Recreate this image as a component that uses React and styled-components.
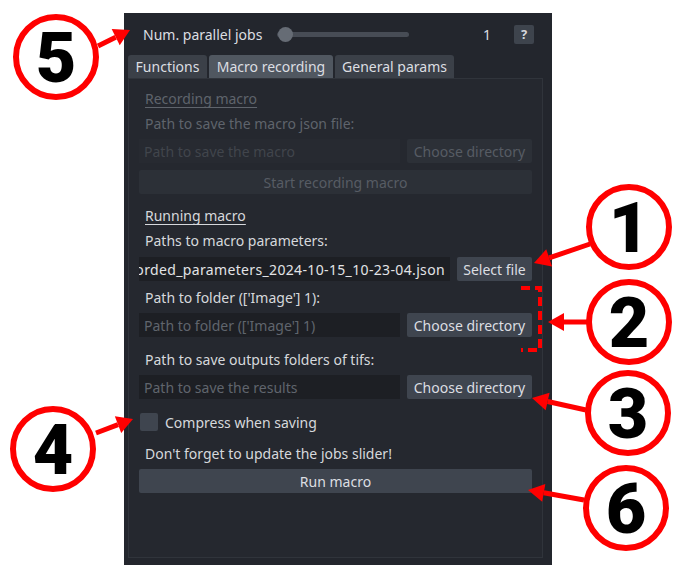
import styled, { createGlobalStyle } from "styled-components";

const GlobalStyle = createGlobalStyle`
  html, body {
    margin: 0;
    padding: 0;
    background: #ffffff;
  }
  body {
    font-family: "Noto Sans", "DejaVu Sans", sans-serif;
  }
`;

const Page = styled.div`
  position: relative;
  width: 682px;
  height: 580px;
  padding: 13px 0 0 124px;
  box-sizing: border-box;
  overflow: hidden;
`;

const Panel = styled.div`
  width: 428px;
  height: 552px;
  box-sizing: border-box;
  background: #23262d;
  padding: 0 9px 7px 4px;
  display: flex;
  flex-direction: column;
  font-size: 14px;
  color: #d6d8dc;
`;

const Header = styled.div`
  height: 42px;
  display: flex;
  align-items: center;
  padding: 0 0 0 15px;
  box-sizing: border-box;
`;

const HeaderLabel = styled.span`
  width: 134px;
  white-space: nowrap;
  color: #dcdee2;
`;

const Slider = styled.div`
  position: relative;
  width: 132px;
  height: 5px;
  border-radius: 3px;
  background: #474c55;
`;

const Handle = styled.div`
  position: absolute;
  left: 1px;
  top: -5px;
  width: 15px;
  height: 15px;
  border-radius: 50%;
  background: #666c75;
`;

const JobCount = styled.span`
  margin-left: 74px;
  width: 31px;
  color: #dcdee2;
`;

const HelpButton = styled.div`
  width: 20px;
  height: 19px;
  border-radius: 2px;
  background: #3e444d;
  color: #d6d8dc;
  font-size: 13px;
  font-weight: 700;
  display: flex;
  align-items: center;
  justify-content: center;
`;

const TabBar = styled.div`
  display: flex;
  gap: 2px;
  height: 23px;
`;

const Tab = styled.div`
  width: ${({ $w }) => $w}px;
  height: 23px;
  box-sizing: border-box;
  border-radius: 3px 3px 0 0;
  background: ${({ $active }) => ($active ? "#505760" : "#3b4048")};
  color: #dcdee2;
  display: flex;
  align-items: center;
  justify-content: center;
  white-space: nowrap;
`;

const Frame = styled.div`
  flex: 1;
  border: 1px solid #30343b;
  background: #25282f;
  padding: 11px 10px 0 10px;
  display: flex;
  flex-direction: column;
`;

const Label = styled.div`
  margin-top: ${({ $mt }) => $mt || 0}px;
  height: 18px;
  line-height: 18px;
  padding-left: 6px;
  white-space: nowrap;
  color: ${({ $disabled }) => ($disabled ? "#5f646c" : "#d6d8dc")};
  text-decoration: ${({ $title }) => ($title ? "underline" : "none")};
  text-underline-offset: 3px;
`;

const Row = styled.div`
  margin-top: ${({ $mt }) => $mt || 0}px;
  display: flex;
  gap: 7px;
  height: 24px;
`;

const Input = styled.div`
  flex: 1;
  min-width: 0;
  overflow: hidden;
  box-sizing: border-box;
  padding: 0 5px 0 3px;
  display: flex;
  align-items: center;
  justify-content: ${({ $alignEnd }) => ($alignEnd ? "flex-end" : "flex-start")};
  white-space: nowrap;
  letter-spacing: ${({ $filled }) => ($filled ? "0.35px" : "normal")};
  background: ${({ $disabled }) => ($disabled ? "#272a31" : "#1d1f24")};
  color: ${({ $disabled, $filled }) => ($disabled ? "#41454c" : $filled ? "#e2e3e6" : "#60656d")};
`;

const InputText = styled.span`
  padding-left: 2px;
`;

const Button = styled.div`
  width: ${({ $w }) => ($w ? `${$w}px` : "auto")};
  flex: none;
  margin-top: ${({ $mt }) => $mt || 0}px;
  height: 24px;
  box-sizing: border-box;
  border-radius: 2px;
  display: flex;
  align-items: center;
  justify-content: center;
  white-space: nowrap;
  background: ${({ $disabled }) => ($disabled ? "#2c3037" : "#3f454f")};
  color: ${({ $disabled }) => ($disabled ? "#575c64" : "#dcdee2")};
`;

const CheckRow = styled.div`
  margin-top: ${({ $mt }) => $mt || 0}px;
  display: flex;
  align-items: center;
  gap: 7px;
  height: 18px;
  padding-left: 1px;
`;

const CheckBox = styled.div`
  width: 18px;
  height: 18px;
  border-radius: 2px;
  background: #3f454f;
`;

const Overlay = styled.svg`
  position: absolute;
  left: 0;
  top: 0;
  pointer-events: none;
`;

const marks = [
  { n: "5", cx: 56, cy: 57, from: [98, 46], to: [130, 30] },
  { n: "4", cx: 53, cy: 449, from: [96, 433], to: [133, 419] },
  { n: "1", cx: 629, cy: 227, from: [590, 244], to: [534, 263] },
  { n: "2", cx: 629, cy: 322, from: [587, 322], to: [548, 322] },
  { n: "3", cx: 628, cy: 413, from: [586, 410], to: [532, 398] },
  { n: "6", cx: 626, cy: 508, from: [584, 500], to: [528, 490] }
];

function Arrow({ from, to }) {
  const [x1, y1] = from;
  const [x2, y2] = to;
  const ang = Math.atan2(y2 - y1, x2 - x1);
  const len = 16;
  const wing = 9;
  const bx = x2 - Math.cos(ang) * len;
  const by = y2 - Math.sin(ang) * len;
  const px = -Math.sin(ang) * wing;
  const py = Math.cos(ang) * wing;
  return (
    <g>
      <line x1={x1} y1={y1} x2={bx} y2={by} stroke="#ff0000" strokeWidth="5" />
      <polygon points={`${x2},${y2} ${bx + px},${by + py} ${bx - px},${by - py}`} fill="#ff0000" />
    </g>
  );
}

function Annotations() {
  return (
    <Overlay width="682" height="580" viewBox="0 0 682 580">
      {marks.map((m) => (
        <g key={m.n}>
          <Arrow from={m.from} to={m.to} />
          <circle cx={m.cx} cy={m.cy} r="40" fill="#ffffff" stroke="#ff0000" strokeWidth="6" />
          <text
            x={m.cx}
            y={m.cy + 25}
            textAnchor="middle"
            fontFamily="Roboto, 'Liberation Sans', sans-serif"
            fontWeight="900"
            fontSize="70"
            fill="#000000"
          >
            {m.n}
          </text>
        </g>
      ))}
      <path
        d="M521 288 H540 V350 H521"
        fill="none"
        stroke="#ff0000"
        strokeWidth="4"
        strokeDasharray="9 5"
      />
    </Overlay>
  );
}

export default function App() {
  return (
    <Page>
      <GlobalStyle />
      <Panel>
        <Header>
          <HeaderLabel>Num. parallel jobs</HeaderLabel>
          <Slider>
            <Handle />
          </Slider>
          <JobCount>1</JobCount>
          <HelpButton>?</HelpButton>
        </Header>

        <TabBar>
          <Tab $w={79}>Functions</Tab>
          <Tab $w={124} $active>
            Macro recording
          </Tab>
          <Tab $w={119}>General params</Tab>
        </TabBar>

        <Frame>
          <Label $title $disabled>
            Recording macro
          </Label>
          <Label $mt={7} $disabled>
            Path to save the macro json file:
          </Label>
          <Row $mt={6}>
            <Input $disabled>
              <InputText>Path to save the macro</InputText>
            </Input>
            <Button $w={125} $disabled>
              Choose directory
            </Button>
          </Row>
          <Button $mt={7} $disabled>
            Start recording macro
          </Button>

          <Label $mt={13} $title>
            Running macro
          </Label>
          <Label $mt={7}>Paths to macro parameters:</Label>
          <Row $mt={7}>
            <Input $filled $alignEnd>
              recorded_parameters_2024-10-15_10-23-04.json
            </Input>
            <Button $w={75}>Select file</Button>
          </Row>
          <Label $mt={8}>Path to folder (['Image'] 1):</Label>
          <Row $mt={6}>
            <Input>
              <InputText>Path to folder (['Image'] 1)</InputText>
            </Input>
            <Button $w={125}>Choose directory</Button>
          </Row>
          <Label $mt={14}>Path to save outputs folders of tifs:</Label>
          <Row $mt={6}>
            <Input>
              <InputText>Path to save the results</InputText>
            </Input>
            <Button $w={125}>Choose directory</Button>
          </Row>
          <CheckRow $mt={14}>
            <CheckBox />
            <span>Compress when saving</span>
          </CheckRow>
          <Label $mt={14}>Don't forget to update the jobs slider!</Label>
          <Button $mt={6}>Run macro</Button>
        </Frame>
      </Panel>
      <Annotations />
    </Page>
  );
}
